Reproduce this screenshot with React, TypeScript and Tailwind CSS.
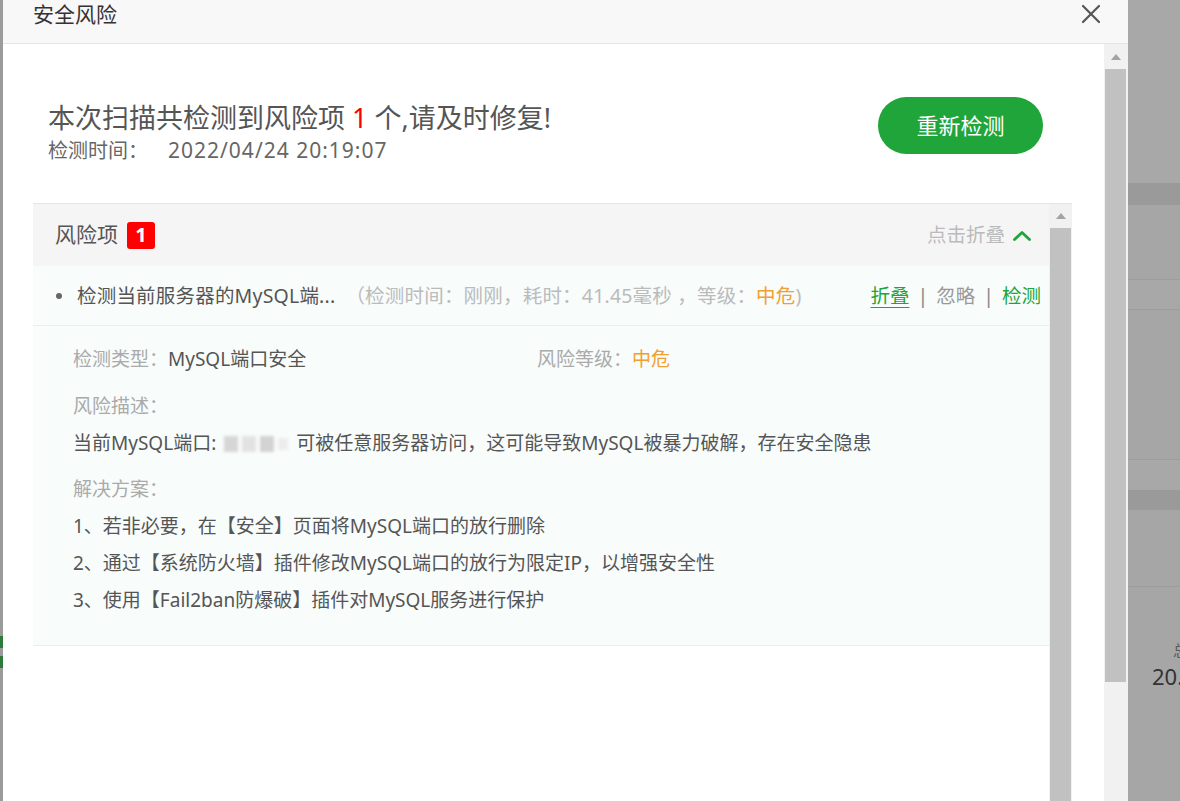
import React from "react";

const FONT = { fontFamily: '"Noto Sans", "Noto Sans CJK SC", sans-serif' };

function ArrowUp() {
  return (
    <svg width="10" height="6" viewBox="0 0 10 6">
      <polygon points="5,0 10,6 0,6" fill="#a3a3a3" />
    </svg>
  );
}

function Chevron() {
  return (
    <svg width="18" height="11" viewBox="0 0 18 11">
      <polyline points="1.5,9.5 9,2.5 16.5,9.5" fill="none" stroke="#20a53a" strokeWidth="2.8" strokeLinecap="round" strokeLinejoin="round" />
    </svg>
  );
}

function CloseIcon() {
  return (
    <svg width="20" height="20" viewBox="0 0 20 20">
      <path d="M2 2 L18 18 M18 2 L2 18" stroke="#555" strokeWidth="2.2" strokeLinecap="round" />
    </svg>
  );
}

export default function App() {
  return (
    <div className="relative w-[1180px] h-[801px] overflow-hidden bg-[#a6a6a6]" style={FONT}>
      {/* background page (behind overlay) */}
      <div className="flex h-full">
        <div className="w-[3px] bg-[#9b9b9b] flex flex-col">
          <div className="h-[636px]" />
          <div className="h-[12px] bg-[#2d7a3c]" />
          <div className="h-[8px]" />
          <div className="h-[12px] bg-[#2d7a3c]" />
        </div>
        <div className="flex-1" />
        <div className="w-[52px] flex flex-col">
          <div className="h-[183px] bg-[#a8a8a8]" />
          <div className="h-[22px] bg-[#9a9a9a]" />
          <div className="h-[75px] bg-[#a6a6a6] border-b border-[#9d9d9d]" />
          <div className="h-[30px] bg-[#a8a8a8] border-b border-[#9d9d9d]" />
          <div className="h-[150px] bg-[#a6a6a6] border-b border-[#9d9d9d]" />
          <div className="h-[30px] bg-[#a8a8a8]" />
          <div className="h-[20px] bg-[#9a9a9a]" />
          <div className="h-[77px] bg-[#a6a6a6] border-b border-[#9d9d9d]" />
          <div className="flex flex-col items-end pt-[52px] overflow-hidden">
            <div className="text-[15px] leading-[22px] text-[#5a5a5a] mr-[-8px]">总</div>
            <div className="text-[22px] leading-[30px] text-[#333] self-start ml-[24px] whitespace-nowrap">20.55</div>
          </div>
        </div>
      </div>

      {/* dialog */}
      <div className="absolute left-[3px] top-0 w-[1125px] h-[801px] bg-white flex flex-col">
        <div className="h-[44px] shrink-0 bg-[#f8f8f8] border-b border-[#e6e6e6] flex items-start justify-between pl-[30px] pr-[27px]">
          <div className="text-[21px] leading-[28px] text-[#333]">安全风险</div>
          <div className="pt-[4px]"><CloseIcon /></div>
        </div>
        <div className="flex-1 min-h-0 flex overflow-hidden">
          <div className="flex-1 min-w-0">
            <div className="flex items-start justify-between pl-[45px] pr-[61px] pt-[53px]">
              <div className="mt-[3px]">
                <div className="text-[27px] leading-[35px] text-[#555]">
                  本次扫描共检测到风险项 <span className="text-[#ff0000]">1</span> 个,请及时修复!
                </div>
                <div className="h-[30px] text-[20px] leading-[30px] text-[#666] flex items-baseline">
                  检测时间：<span className="ml-[20px] text-[21px] leading-[30px] tracking-[1px]">2022/04/24 20:19:07</span>
                </div>
              </div>
              <button className="w-[165px] h-[57px] rounded-full bg-[#20a53a] text-white text-[22px]">重新检测</button>
            </div>

            <div className="mt-[38px] ml-[30px] mr-[32px] h-[700px] border-t border-[#e6e6e6] flex">
              <div className="flex-1 min-w-0">
                <div className="h-[62px] bg-[#f5f5f5] flex items-center justify-between pl-[22px] pr-[18px]">
                  <div className="flex items-center">
                    <span className="text-[21px] text-[#555]">风险项</span>
                    <span className="ml-[9px] w-[28px] h-[27px] rounded-[3px] bg-[#ff0000] text-white text-[20px] font-bold flex items-center justify-center">1</span>
                  </div>
                  <div className="flex items-center">
                    <span className="text-[19.5px] text-[#bbb]">点击折叠</span>
                    <span className="ml-[8px] flex"><Chevron /></span>
                  </div>
                </div>
                <div className="h-[60px] bg-[#f8fcfb] border-b border-[#e9eeed] flex items-center justify-between pl-[23px] pr-[8px] text-[19.5px]">
                  <div className="flex items-center whitespace-nowrap">
                    <span className="w-[6px] h-[6px] rounded-full bg-[#666]" />
                    <span className="ml-[15px] text-[#555] tracking-[0.2px]">检测当前服务器的MySQL端...</span>
                    <span className="ml-[10px] text-[#bbb] tracking-[0.2px]">（检测时间：刚刚，耗时：41.45毫秒 ，等级：<span className="text-[#f0a030]">中危</span>)</span>
                  </div>
                  <div className="flex items-center whitespace-nowrap">
                    <span className="text-[#20a53a] underline underline-offset-4">折叠</span>
                    <span className="mx-[8px] text-[#888]">|</span>
                    <span className="text-[#999]">忽略</span>
                    <span className="mx-[8px] text-[#888]">|</span>
                    <span className="text-[#20a53a]">检测</span>
                  </div>
                </div>
                <div className="h-[320px] bg-[#f8fcfb] border-b border-[#e9eeed] pl-[40px] pt-[15px] text-[19px] leading-[37px]">
                  <div className="flex">
                    <div className="w-[464px]">
                      <span className="text-[#aaa]">检测类型：</span>
                      <span className="text-[#555]">MySQL端口安全</span>
                    </div>
                    <div>
                      <span className="text-[#aaa]">风险等级：</span>
                      <span className="text-[#f0a030]">中危</span>
                    </div>
                  </div>
                  <div className="mt-[10px] text-[#aaa]">风险描述：</div>
                  <div className="text-[#555] flex items-center whitespace-nowrap">
                    当前MySQL端口:
                    <span className="mx-[8px] inline-flex items-center gap-[4px] blur-[1.5px]">
                      <span className="w-[14px] h-[16px] bg-[#d6d6d6]" />
                      <span className="w-[14px] h-[16px] bg-[#e2e2e2]" />
                      <span className="w-[14px] h-[16px] bg-[#d2d2d2]" />
                      <span className="w-[10px] h-[12px] bg-[#ececec]" />
                    </span>
                    可被任意服务器访问，这可能导致MySQL被暴力破解，存在安全隐患
                  </div>
                  <div className="mt-[9px] text-[#aaa]">解决方案：</div>
                  <div className="text-[#555]">1、若非必要，在【安全】页面将MySQL端口的放行删除</div>
                  <div className="text-[#555]">2、通过【系统防火墙】插件修改MySQL端口的放行为限定IP，以增强安全性</div>
                  <div className="text-[#555]">3、使用【Fail2ban防爆破】插件对MySQL服务进行保护</div>
                </div>
              </div>
              <div className="w-[23px] flex flex-col bg-[#f1f1f1]">
                <div className="h-[24px] flex items-center justify-center"><ArrowUp /></div>
                <div className="flex-1 mx-[1px] bg-[#c1c1c1]" />
              </div>
            </div>
          </div>
          <div className="w-[24px] flex flex-col bg-[#f1f1f1]">
            <div className="h-[25px] flex items-center justify-center"><ArrowUp /></div>
            <div className="h-[613px] ml-[1px] mr-[2px] bg-[#c1c1c1]" />
          </div>
        </div>
      </div>
    </div>
  );
}
